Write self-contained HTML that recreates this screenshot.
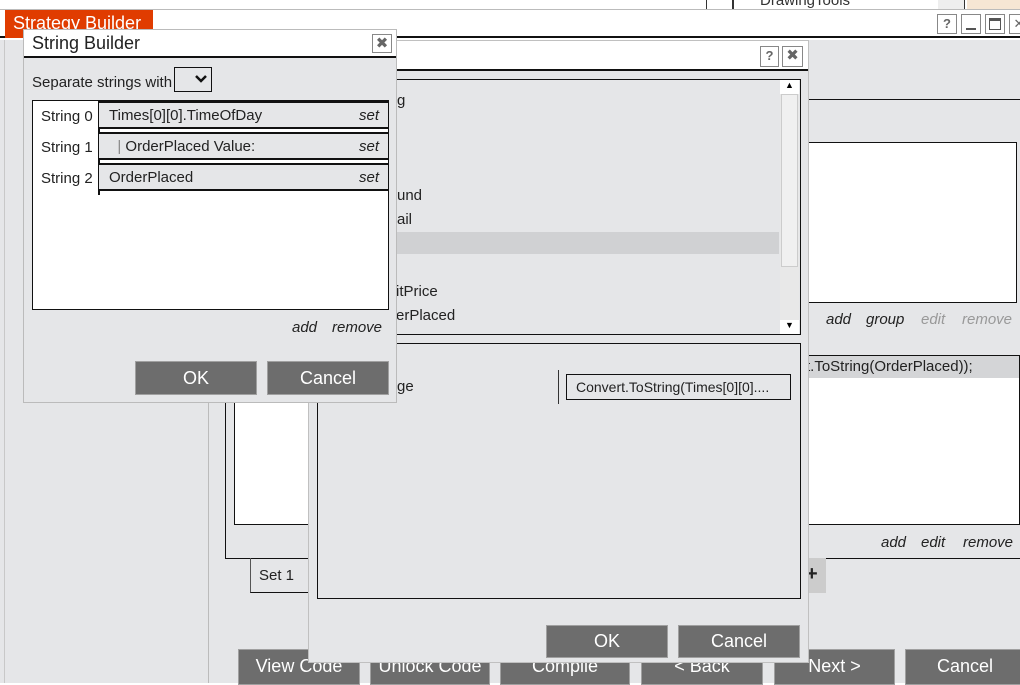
<!DOCTYPE html>
<html><head><meta charset="utf-8"><style>
*{margin:0;padding:0;box-sizing:border-box}
body{width:1020px;height:683px;overflow:hidden;background:#fff;font-family:"Liberation Sans","DejaVu Sans",sans-serif;font-size:15px;color:#222;position:relative}
.a{position:absolute}
.btn{position:absolute;background:#6d6d6d;border:1px solid #a0a0a0;color:#fff;font-size:18px;text-align:center}
.ib{position:absolute;border:1px solid #888;background:#fff;color:#666;font-size:13px;text-align:center;font-weight:bold;line-height:17px}
.it{font-style:italic}
</style></head><body>
<div class="a" style="left:706px;top:0;width:252px;height:10px;border-left:1px solid #333;border-right:1px solid #999;background:#fff"></div>
<div class="a" style="left:732px;top:0;width:2px;height:10px;background:#333"></div>
<div class="a" style="left:760px;top:-8px;font-size:15px;color:#333">DrawingTools</div>
<div class="a" style="left:938px;top:0;width:27px;height:10px;background:#eee;border-right:1px solid #333"></div>
<div class="a" style="left:967px;top:0;width:53px;height:10px;background:#f6e6d4"></div>
<div class="a" style="left:0;top:9px;width:1020px;height:1px;background:#bbb"></div>
<div class="a" style="left:0;top:10px;width:1020px;height:28px;background:#fff;border-bottom:2px solid #111"></div>
<div class="a" style="left:5px;top:10px;width:148px;height:28px;background:#e03c00;color:#fff;font-size:18px;padding:3px 0 0 8px">Strategy Builder</div>
<div class="ib" style="left:937px;top:14px;width:20px;height:20px">?</div>
<div class="ib" style="left:961px;top:14px;width:20px;height:20px"><div class="a" style="left:4px;top:13px;width:10px;height:2px;background:#555"></div></div>
<div class="ib" style="left:985px;top:14px;width:20px;height:20px"><div class="a" style="left:3px;top:3px;width:12px;height:12px;border:1px solid #555;border-top-width:3px"></div></div>
<div class="ib" style="left:1009px;top:14px;width:20px;height:20px">✕</div>
<div class="a" style="left:0;top:40px;width:1020px;height:643px;background:#e5e6e8"></div>
<div class="a" style="left:4px;top:40px;width:1px;height:643px;background:#c8c8c8"></div>
<div class="a" style="left:208px;top:40px;width:1px;height:643px;background:#bbb"></div>
<div class="a" style="left:800px;top:99px;width:220px;height:1px;background:#111"></div>
<div class="a" style="left:800px;top:142px;width:217px;height:161px;background:#fff;border:1px solid #111"></div>
<div class="a it" style="left:826px;top:311px">add</div>
<div class="a it" style="left:866px;top:311px">group</div>
<div class="a it" style="left:921px;top:311px;color:#999">edit</div>
<div class="a it" style="left:962px;top:311px;color:#999">remove</div>
<div class="a" style="left:225px;top:390px;width:800px;height:169px;border-left:1px solid #111;border-bottom:1px solid #111"></div>
<div class="a" style="left:234px;top:355px;width:786px;height:170px;background:#fff;border:1px solid #111"></div>
<div class="a" style="left:800px;top:356px;width:219px;height:22px;background:#d4d5d7;padding:2px 0 0 6px">t.ToString(OrderPlaced));</div>
<div class="a it" style="left:881px;top:534px">add</div>
<div class="a it" style="left:921px;top:534px">edit</div>
<div class="a it" style="left:963px;top:534px">remove</div>
<div class="a" style="left:250px;top:558px;width:60px;height:35px;border-left:1px solid #555;border-bottom:1px solid #111;padding:9px 0 0 8px">Set 1</div>
<div class="a" style="left:802px;top:558px;width:24px;height:35px;background:#ccc;font-size:20px;font-weight:bold;padding:5px 0 0 4px">+</div>
<div class="btn" style="left:238px;top:649px;width:122px;height:36px;padding-top:6px">View Code</div>
<div class="btn" style="left:370px;top:649px;width:120px;height:36px;padding-top:6px">Unlock Code</div>
<div class="btn" style="left:500px;top:649px;width:130px;height:36px;padding-top:6px">Compile</div>
<div class="btn" style="left:641px;top:649px;width:122px;height:36px;padding-top:6px">&lt; Back</div>
<div class="btn" style="left:774px;top:649px;width:121px;height:36px;padding-top:6px">Next &gt;</div>
<div class="btn" style="left:905px;top:649px;width:120px;height:36px;padding-top:6px">Cancel</div>
<div class="a" style="left:308px;top:40px;width:501px;height:623px;background:#e5e6e8;border:1px solid #c0c0c0"></div>
<div class="a" style="left:309px;top:41px;width:499px;height:30px;background:#fff;border-bottom:2px solid #111"></div>
<div class="ib" style="left:760px;top:46px;width:19px;height:21px">?</div>
<div class="ib" style="left:782px;top:46px;width:21px;height:21px;font-size:15px">✖</div>
<div class="a" style="left:317px;top:79px;width:484px;height:256px;border:1px solid #111"></div>
<div class="a" style="left:780px;top:80px;width:19px;height:254px;background:#e8e8e8"></div>
<div class="a" style="left:780px;top:80px;width:19px;height:14px;background:#fff;font-size:9px;text-align:center;color:#000">▲</div>
<div class="a" style="left:780px;top:320px;width:19px;height:14px;background:#fff;font-size:9px;text-align:center;color:#000">▼</div>
<div class="a" style="left:781px;top:94px;width:17px;height:173px;background:#f0f0f0;border:1px solid #ccc"></div>
<div class="a" style="left:318px;top:232px;width:461px;height:22px;background:#d0d1d3"></div>
<div class="a" style="left:397px;top:92px">g</div>
<div class="a" style="left:397px;top:187px">und</div>
<div class="a" style="left:397px;top:211px">ail</div>
<div class="a" style="left:396px;top:283px">itPrice</div>
<div class="a" style="left:396px;top:307px">erPlaced</div>
<div class="a" style="left:317px;top:343px;width:484px;height:256px;border:1px solid #111"></div>
<div class="a" style="left:397px;top:378px">ge</div>
<div class="a" style="left:558px;top:370px;width:1px;height:34px;background:#333"></div>
<div class="a" style="left:566px;top:374px;width:225px;height:26px;border:1px solid #111;font-size:14px;padding:4px 0 0 9px">Convert.ToString(Times[0][0]....</div>
<div class="btn" style="left:546px;top:625px;width:122px;height:33px;padding-top:5px">OK</div>
<div class="btn" style="left:678px;top:625px;width:122px;height:33px;padding-top:5px">Cancel</div>
<div class="a" style="left:23px;top:29px;width:374px;height:374px;background:#e5e6e8;border:1px solid #bbb"></div>
<div class="a" style="left:24px;top:30px;width:372px;height:28px;background:#fff;border-bottom:2px solid #111;font-size:18px;padding:3px 0 0 8px">String Builder</div>
<div class="ib" style="left:372px;top:34px;width:20px;height:19px;font-size:15px">✖</div>
<div class="a" style="left:32px;top:74px">Separate strings with</div>
<div class="a" style="left:174px;top:67px;width:38px;height:25px;border:1px solid #111">
<svg class="a" style="left:20px;top:6px" width="12" height="10"><path d="M1 2 L6 7 L11 2" stroke="#111" stroke-width="2.5" fill="none"/></svg></div>
<div class="a" style="left:32px;top:100px;width:357px;height:210px;background:#fff;border:1px solid #111"></div>
<div class="a" style="left:41px;top:108px">String 0</div>
<div class="a" style="left:41px;top:139px">String 1</div>
<div class="a" style="left:41px;top:170px">String 2</div>
<div class="a" style="left:98px;top:101px;width:2px;height:94px;background:#111"></div>
<div class="a" style="left:99px;top:101px;width:289px;height:28px;background:#e5e6e8;border-top:2px solid #111;border-bottom:2px solid #111;padding:4px 0 0 10px">Times[0][0].TimeOfDay<span class="a it" style="right:9px;top:4px">set</span></div>
<div class="a" style="left:99px;top:132px;width:289px;height:28px;background:#e5e6e8;border-top:2px solid #111;border-bottom:2px solid #111;padding:4px 0 0 10px"><span style="color:#888">&nbsp;&nbsp;|</span> OrderPlaced Value:<span class="a it" style="right:9px;top:4px">set</span></div>
<div class="a" style="left:99px;top:163px;width:289px;height:28px;background:#e5e6e8;border-top:2px solid #111;border-bottom:2px solid #111;padding:4px 0 0 10px">OrderPlaced<span class="a it" style="right:9px;top:4px">set</span></div>
<div class="a it" style="left:292px;top:319px">add</div>
<div class="a it" style="left:332px;top:319px">remove</div>
<div class="btn" style="left:135px;top:361px;width:122px;height:34px;padding-top:6px">OK</div>
<div class="btn" style="left:267px;top:361px;width:122px;height:34px;padding-top:6px">Cancel</div>
</body></html>
